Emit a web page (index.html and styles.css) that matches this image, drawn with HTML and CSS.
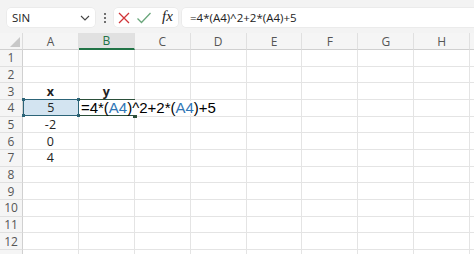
FILE: index.html
```html
<!DOCTYPE html>
<html>
<head>
<meta charset="utf-8">
<link rel="stylesheet" href="styles.css">
</head>
<body>
<div class="toolbar">
  <div class="namebox">
    <span class="name">SIN</span>
    <svg class="chev" width="10" height="6" viewBox="0 0 10 6"><path d="M1 1 L5 5 L9 1" fill="none" stroke="#444" stroke-width="1.1"/></svg>
  </div>
  <div class="dots"><span></span><span></span><span></span></div>
  <div class="iconbox">
    <svg width="14" height="14" viewBox="0 0 14 14"><path d="M2 2 L12 12 M12 2 L2 12" stroke="#d13438" stroke-width="1.3" fill="none"/></svg>
    <svg width="16" height="14" viewBox="0 0 16 14"><path d="M1.5 7.5 L5.5 11.5 L14.5 2" stroke="#6aa67b" stroke-width="1.3" fill="none"/></svg>
    <span class="fx">fx</span>
  </div>
  <div class="formula">=4*(A4)^2+2*(A4)+5</div>
</div>
<div class="grid">
  <div class="corner"><svg width="10" height="10" viewBox="0 0 10 10"><path d="M10 0 L10 10 L0 10 Z" fill="#c8c8c8"/></svg></div>
  <div class="ch">A</div><div class="ch sel">B</div><div class="ch">C</div><div class="ch">D</div><div class="ch">E</div><div class="ch">F</div><div class="ch">G</div><div class="ch">H</div><div class="ch"></div>

  <div class="rh">1</div><div class="c"></div><div class="c"></div><div class="c"></div><div class="c"></div><div class="c"></div><div class="c"></div><div class="c"></div><div class="c"></div><div class="c"></div>
  <div class="rh">2</div><div class="c"></div><div class="c"></div><div class="c"></div><div class="c"></div><div class="c"></div><div class="c"></div><div class="c"></div><div class="c"></div><div class="c"></div>
  <div class="rh">3</div><div class="c ctr b">x</div><div class="c ctr b">y</div><div class="c"></div><div class="c"></div><div class="c"></div><div class="c"></div><div class="c"></div><div class="c"></div><div class="c"></div>
  <div class="rh">4</div><div class="c ref"><div class="refbox">5<i class="h tl"></i><i class="h tr"></i><i class="h bl"></i><i class="h br"></i></div></div><div class="c edit"><div class="editbox"><span class="etext">=4*(<span class="blue">A4</span>)^2+2*(<span class="blue">A4</span>)+5</span><i class="eh"></i></div></div><div class="c"></div><div class="c"></div><div class="c"></div><div class="c"></div><div class="c"></div><div class="c"></div><div class="c"></div>
  <div class="rh">5</div><div class="c ctr">-2</div><div class="c"></div><div class="c"></div><div class="c"></div><div class="c"></div><div class="c"></div><div class="c"></div><div class="c"></div><div class="c"></div>
  <div class="rh">6</div><div class="c ctr">0</div><div class="c"></div><div class="c"></div><div class="c"></div><div class="c"></div><div class="c"></div><div class="c"></div><div class="c"></div><div class="c"></div>
  <div class="rh">7</div><div class="c ctr">4</div><div class="c"></div><div class="c"></div><div class="c"></div><div class="c"></div><div class="c"></div><div class="c"></div><div class="c"></div><div class="c"></div>
  <div class="rh">8</div><div class="c"></div><div class="c"></div><div class="c"></div><div class="c"></div><div class="c"></div><div class="c"></div><div class="c"></div><div class="c"></div><div class="c"></div>
  <div class="rh">9</div><div class="c"></div><div class="c"></div><div class="c"></div><div class="c"></div><div class="c"></div><div class="c"></div><div class="c"></div><div class="c"></div><div class="c"></div>
  <div class="rh">10</div><div class="c"></div><div class="c"></div><div class="c"></div><div class="c"></div><div class="c"></div><div class="c"></div><div class="c"></div><div class="c"></div><div class="c"></div>
  <div class="rh">11</div><div class="c"></div><div class="c"></div><div class="c"></div><div class="c"></div><div class="c"></div><div class="c"></div><div class="c"></div><div class="c"></div><div class="c"></div>
  <div class="rh">12</div><div class="c"></div><div class="c"></div><div class="c"></div><div class="c"></div><div class="c"></div><div class="c"></div><div class="c"></div><div class="c"></div><div class="c"></div>
  <div class="rh"></div><div class="c"></div><div class="c"></div><div class="c"></div><div class="c"></div><div class="c"></div><div class="c"></div><div class="c"></div><div class="c"></div><div class="c"></div>
</div>
</body>
</html>
```
FILE: styles.css
```css
html, body {
  margin: 0;
  padding: 0;
  width: 474px;
  height: 254px;
  overflow: hidden;
  background: #ffffff;
  font-family: "Open Sans", "Noto Sans", sans-serif;
}
.toolbar {
  height: 33px;
  background: #f3f3f3;
  box-sizing: border-box;
  padding: 8px 0 6px 7px;
  display: flex;
  align-items: stretch;
}
.namebox {
  width: 88px;
  background: #fff;
  border-radius: 4px;
  display: flex;
  align-items: center;
  justify-content: space-between;
  padding: 0 5px 0 5px;
  box-sizing: border-box;
  box-shadow: 0 0 0 0.5px #e4e4e4;
}
.name {
  font-size: 11.5px;
  color: #222;
}
.chev { margin-top: 1px; }
.dots {
  width: 19px;
  display: flex;
  flex-direction: column;
  align-items: center;
  justify-content: center;
  gap: 2px;
}
.dots span {
  width: 2px;
  height: 2px;
  background: #444;
  border-radius: 1px;
}
.iconbox {
  width: 64px;
  background: #fff;
  border-radius: 4px;
  display: flex;
  align-items: center;
  gap: 5px;
  padding-left: 3px;
  box-sizing: border-box;
  box-shadow: 0 0 0 0.5px #e4e4e4;
}
.fx {
  font-family: "Liberation Serif", "DejaVu Serif", serif;
  font-style: italic;
  font-size: 15px;
  color: #222;
  margin-left: 5px;
  margin-top: -2px;
}
.formula {
  flex: 1;
  margin-left: 4px;
  background: #fff;
  border-radius: 4px 0 0 4px;
  font-size: 11.5px;
  color: #222;
  display: flex;
  align-items: center;
  padding-left: 8px;
  box-shadow: 0 0 0 0.5px #e4e4e4;
}
.grid {
  display: grid;
  grid-template-columns: 23px repeat(9, 55.9px);
  grid-template-rows: 17px repeat(13, 16.67px);
  font-size: 12.5px;
  overflow: hidden;
  width: 474px;
  height: 221px;
}
.grid > div {
  box-sizing: border-box;
}
.corner {
  background: #f5f5f5;
  border-right: 1px solid #dcdcdc;
  border-bottom: 1px solid #d0d0d0;
  display: flex;
  align-items: flex-end;
  justify-content: flex-end;
  padding: 0 2px 2px 0;
}
.ch {
  background: #f5f5f5;
  border-right: 1px solid #e0e0e0;
  border-bottom: 1px solid #d0d0d0;
  color: #555;
  font-size: 12px;
  display: flex;
  align-items: center;
  justify-content: center;
}
.ch.sel {
  background: #e1e1e1;
  color: #217346;
  border-bottom: 2px solid #217346;
}
.rh {
  background: #f5f5f5;
  border-right: 1px solid #d0d0d0;
  border-bottom: 1px solid #e0e0e0;
  color: #555;
  font-size: 12px;
  display: flex;
  align-items: center;
  justify-content: center;
}
.c {
  border-right: 1px solid #e4e4e4;
  border-bottom: 1px solid #e4e4e4;
  color: #222;
  display: flex;
  align-items: center;
  white-space: nowrap;
}
.ctr { justify-content: center; }
.b { font-weight: 700; }
.ref {
  padding: 0;
  border: none;
  position: relative;
}
.refbox {
  box-sizing: border-box;
  width: 100%;
  height: 100%;
  margin-top: -1px;
  background: #d3e4f1;
  border: 1.5px solid #2c6478;
  display: flex;
  align-items: center;
  justify-content: center;
  position: relative;
  color: #222;
}
.h {
  position: absolute;
  width: 3px;
  height: 3px;
  background: #2c6478;
}
.tl { left: -2px; top: -2px; }
.tr { right: -2px; top: -2px; }
.bl { left: -2px; bottom: -2px; }
.br { right: -2px; bottom: -2px; }
.edit {
  border: none;
  overflow: visible;
  position: relative;
  z-index: 2;
}
.editbox {
  box-sizing: border-box;
  width: 100%;
  height: 100%;
  margin-top: -1px;
  border-top: 1.5px solid #2b4f3a;
  border-bottom: 1.5px solid #2b4f3a;
  display: flex;
  align-items: center;
  overflow: visible;
  position: relative;
}
.etext {
  font-family: "Liberation Sans", "Noto Sans", sans-serif;
  font-size: 15px;
  line-height: 13px;
  color: #000;
  padding: 0 2px;
  background: #fff;
  white-space: nowrap;
}
.blue { color: #2f75b5; }
.eh {
  position: absolute;
  right: -2px;
  bottom: -3px;
  width: 4px;
  height: 3px;
  background: #2b4f3a;
}
```
